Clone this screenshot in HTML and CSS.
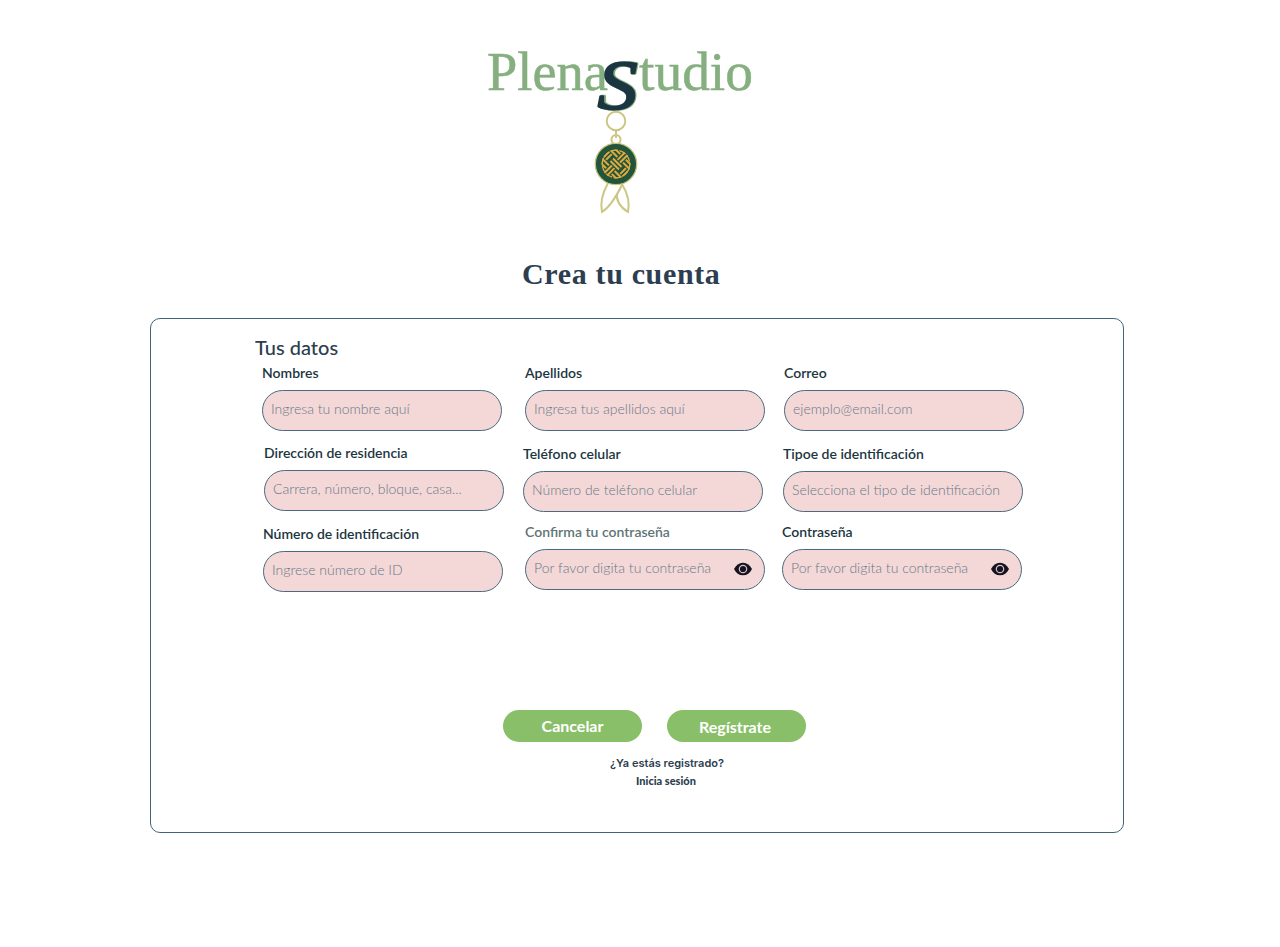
FILE: index.html
```html
<!DOCTYPE html>
<html lang="es">
<head>
<meta charset="utf-8">
<title>PlenaStudio</title>
<link rel="stylesheet" href="styles.css">
</head>
<body>
<header class="brand">
<svg class="logo" viewBox="480 44 280 176" width="280" height="176" role="img">
  <g class="wordmark">
    <text x="487" y="90" font-size="54" textLength="121" lengthAdjust="spacingAndGlyphs">Plena</text>
    <text x="639" y="90" font-size="54" textLength="114" lengthAdjust="spacingAndGlyphs">tudio</text>
  </g>
  <text class="s-shadow" x="599" y="108.500" font-size="69" textLength="39" lengthAdjust="spacingAndGlyphs">S</text>
  <text class="s-main" x="597.500" y="108.500" font-size="69" textLength="40" lengthAdjust="spacingAndGlyphs">S</text>
  <g class="chain">
    <circle cx="616" cy="121" r="9.300"/>
    <path d="M616 129v9"/>
    <circle cx="616" cy="139.500" r="4.500"/>
    <path d="M608 183C602 194 600 203 602 212C610 207 617 195 622 185"/>
    <path d="M622 184C628 194 630 203 628 212C620 207 616 201 617 193"/>
  </g>
  <circle class="medal" cx="616" cy="164" r="20.700"/>
  <clipPath id="disc"><circle cx="616" cy="164" r="14.500"/></clipPath>
  <g clip-path="url(#disc)"><g class="knot" transform="rotate(45 616 164)">
    <path d="M600 154h12M600 158h12M620 154h12M620 158h12M610 162.200h12M610 165.800h12M600 170h12M600 174h12M620 170h12M620 174h12"/>
    <path d="M614.200 148v12M617.800 148v12M606 160v8M602.500 160v8M626 160v8M629.500 160v8M614.200 168v12M617.800 168v12"/>
  </g></g>
  <circle class="knot rim" cx="616" cy="164" r="13.800"/>
</svg>
</header>
<h1 class="title">Crea tu cuenta</h1>
<main class="card">
  <h2 class="section">Tus datos</h2>
  <form class="fields">
    <div class="column first">
      <label class="field">Nombres<input class="control" placeholder="Ingresa tu nombre aquí"></label>
      <label class="field address">Dirección de residencia<input class="control" placeholder="Carrera, número, bloque, casa..."></label>
      <label class="field number">Número de identificación<input class="control" placeholder="Ingrese número de ID"></label>
    </div>
    <div class="column second">
      <label class="field surname">Apellidos<input class="control" placeholder="Ingresa tus apellidos aquí"></label>
      <label class="field phone">Teléfono celular<input class="control" placeholder="Número de teléfono celular"></label>
      <label class="field confirm"><span class="muted">Confirma tu contraseña</span>
        <span class="secret"><input class="control" placeholder="Por favor digita tu contraseña"><svg class="eye" viewBox="0 0 18 14"><path d="M0 7C2 3 5 .7 9 .7S16 3 18 7C16 11 13 13.300 9 13.300S2 11 0 7Z"/><circle cx="9" cy="7" r="3.700"/></svg></span></label>
    </div>
    <div class="column third">
      <label class="field mail">Correo<input class="control" placeholder="ejemplo@email.com"></label>
      <label class="field kind">Tipoe de identificación<input class="control" placeholder="Selecciona el tipo de identificación"></label>
      <label class="field password">Contraseña
        <span class="secret"><input class="control" placeholder="Por favor digita tu contraseña"><svg class="eye" viewBox="0 0 18 14"><path d="M0 7C2 3 5 .7 9 .7S16 3 18 7C16 11 13 13.300 9 13.300S2 11 0 7Z"/><circle cx="9" cy="7" r="3.700"/></svg></span></label>
    </div>
  </form>
  <div class="actions">
    <button class="button">Cancelar</button>
    <button class="button submit">Regístrate</button>
  </div>
  <p class="question">¿Ya estás registrado?</p>
  <a class="login">Inicia sesión</a>
</main>
</body>
</html>
```

FILE: styles.css
```css
* { box-sizing: border-box; }
body { margin: 0; background: #fff; color: #2c3e50; font-family: Lato, sans-serif; }
.brand { height: 254px; padding: 44px 0 0 480px; }
.logo { display: block; overflow: visible; }
.wordmark { fill: #86af80; stroke: #86af80; stroke-width: .5; font-family: "Liberation Serif", serif; }
.s-main, .s-shadow { font-family: "Liberation Serif", serif; font-style: italic; stroke-linejoin: round; }
.s-main { fill: #1c3641; stroke: #1c3641; stroke-width: 2; }
.s-shadow { fill: #86af80; stroke: #86af80; stroke-width: 3; }
.chain { fill: none; stroke: #cdc785; stroke-width: 2; }
.medal { fill: #23543c; stroke: #c5c47a; stroke-width: 1.3; }
.knot { fill: none; stroke: #e0aa3e; stroke-width: 2; }
.rim { stroke-width: 1.3; stroke-dasharray: 7 1.5; }
.title { margin: 0 0 0 522px; height: 64px; font: 700 30px/40px "Liberation Serif", serif; white-space: nowrap; letter-spacing: .65px; }
.card { width: 974px; height: 515px; margin-left: 150px; padding: 15px 0 0 104px; border: 1px solid #3f647b; border-radius: 10px; }
.section { margin: 0; height: 30px; font-size: 20px; line-height: 26px; font-weight: 500; }
.fields { display: flex; height: 346px; padding-left: 7px; }
.column { display: flex; flex-direction: column; width: 260px; }
.first { width: 261px; }
.field { display: flex; flex-direction: column; gap: 9px; width: 240px; height: 67px; font-size: 14px; line-height: 17px; font-weight: 600; color: #1c3641; }
.control { display: block; width: 240px; height: 41px; margin: 0; padding: 0 8px 4px; border: 1px solid #4a6b7f; border-radius: 20.5px; background: #f4d7d7; font: 300 14px Lato, sans-serif; outline: 0; }
.control::placeholder { color: #667a89; opacity: 1; }
.address { margin: 13px 0 0 2px; }
.number { margin: 14px 0 0 1px; }
.surname { margin-left: 2px; }
.phone { margin-top: 14px; }
.confirm { margin: 11px 0 0 2px; }
.mail { margin-left: 1px; }
.kind { margin-top: 14px; }
.password { margin: 11px 0 0 -1px; }
.muted { color: #5f7475; }
.secret { position: relative; display: block; }
.eye { position: absolute; top: 13px; right: 13px; width: 18px; height: 14px; fill: #15131f; }
.eye circle { fill: none; stroke: #d9c3c5; stroke-width: 1.2; }
.actions { display: flex; gap: 25px; margin-left: 248px; }
.button { width: 139px; height: 32px; padding: 0; border: 0; border-radius: 16px; background: #8abf69; color: #fff; font: 700 16px/32px Lato, sans-serif; }
.submit { padding: 1px 3px 0 0; }
.question { width: 140px; margin: 13px 0 0 342px; font: 600 11px/16px Inter, sans-serif; text-align: center; }
.login { display: block; width: 140px; margin: 2px 0 0 341px; font-size: 11px; line-height: 16px; font-weight: 900; text-align: center; }
```
